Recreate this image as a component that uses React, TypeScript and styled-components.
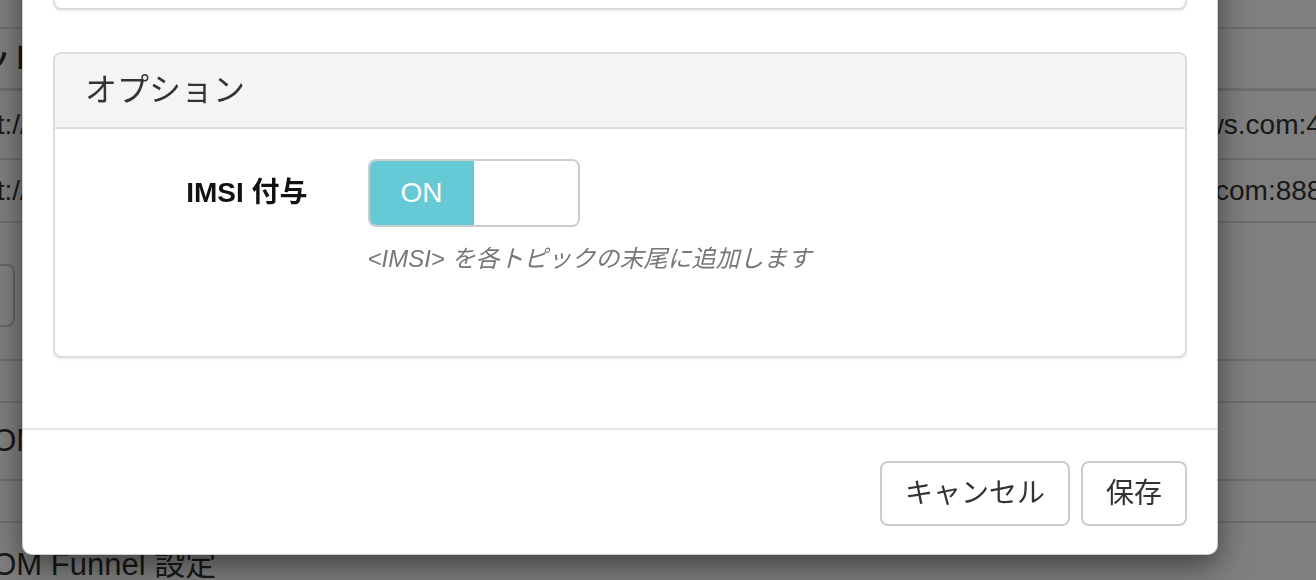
import React from 'react';
import styled, { createGlobalStyle } from 'styled-components';

const GlobalStyle = createGlobalStyle`
    * {
        box-sizing: border-box;
    }

    html, body {
        margin: 0;
        padding: 0;
        overflow: hidden;
    }

    body {
        width: 1316px;
        height: 580px;
        background: #FFF;
        color: #333;
        font-family: "Liberation Sans", "Noto Sans CJK JP", sans-serif;
    }
`;

// Page behind the modal
const Page = styled.div`
    width: 1480px;
    margin-left: -120px;
    padding-top: 27px;
    font-size: 28px;
    line-height: 40px;
    color: #333;
`;

const Table = styled.div`
    border-top: 2px solid #DDD;
`;

const TableRow = styled.div<{ $height: number; $head?: boolean }>`
    display: grid;
    grid-template-columns: 700px 1fr;
    align-items: center;
    height: ${({ $height }) => $height}px;
    border-bottom: ${({ $head }) => ($head ? 3 : 2)}px solid #DDD;
    font-weight: ${({ $head }) => ($head ? 700 : 400)};
`;

const Cell = styled.div<{ $indent: number }>`
    padding-left: ${({ $indent }) => $indent}px;
    white-space: nowrap;
`;

const DestCell = styled.div<{ $end?: number }>`
    display: flex;
    justify-content: flex-end;
    overflow: hidden;
    white-space: nowrap;
    padding-right: ${({ $end }) => $end ?? 8}px;
`;

const PageButton = styled.button`
    height: 63px;
    margin-top: 9px;
    padding: 0 21px;
    border: 2px solid #CCC;
    border-radius: 8px;
    background: #FFF;
    color: #333;
    font: inherit;
`;

const List = styled.div`
    margin-top: 40px;
    border-top: 2px solid #DDD;
    font-size: 31px;
`;

const ListItem = styled.div<{ $height: number }>`
    display: flex;
    align-items: center;
    height: ${({ $height }) => $height}px;
    padding-left: 2px;
    border-bottom: 2px solid #DDD;
    white-space: nowrap;
`;

const Backdrop = styled.div`
    position: fixed;
    inset: 0;
    background: rgba(0, 0, 0, 0.5);
`;

// Modal
const Modal = styled.div`
    position: fixed;
    left: 22px;
    right: 98px;
    bottom: 25px;
    background: #FFF;
    border: 1px solid rgba(0, 0, 0, 0.2);
    border-radius: 10px;
    box-shadow: 0 10px 30px rgba(0, 0, 0, 0.5);
    font-size: 28px;
    line-height: 40px;
    color: #333;
`;

const ModalBody = styled.div`
    padding: 30px;
`;

const Panel = styled.section<{ $gap: number }>`
    background: #FFF;
    border: 2px solid #DDD;
    border-radius: 8px;
    box-shadow: 0 2px 2px rgba(0, 0, 0, 0.05);
    margin-bottom: ${({ $gap }) => $gap}px;
    overflow: hidden;
`;

const PanelHeading = styled.div`
    background: #F4F4F4;
    border-bottom: 2px solid #DDD;
    padding: 19px 30px;
`;

const PanelTitle = styled.h3`
    margin: 0;
    font-size: 32px;
    line-height: 35px;
    font-weight: 400;
    color: #333;
`;

const PanelBody = styled.div<{ $height?: number }>`
    padding: 30px;
    height: ${({ $height }) => ($height ? `${$height}px` : 'auto')};
`;

const FormRow = styled.div`
    display: grid;
    grid-template-columns: 25% 75%;
    margin: 0 -30px 50px;
`;

const Label = styled.label`
    padding: 14px 30px 0;
    text-align: right;
    font-weight: 700;
    color: #111;
`;

const Control = styled.div`
    padding: 0 30px;
`;

const Switch = styled.div`
    display: flex;
    width: 212px;
    height: 68px;
    border: 2px solid #CCC;
    border-radius: 8px;
    overflow: hidden;
`;

const SwitchOn = styled.span`
    width: 104px;
    display: flex;
    align-items: center;
    justify-content: center;
    background: #66C9D6;
    color: #FFF;
    font-size: 28px;
`;

const SwitchHandle = styled.span`
    flex: 1;
    background: #FFF;
`;

const HelpText = styled.p`
    margin: 15px 0 0;
    font-size: 24px;
    line-height: 34px;
    font-style: italic;
    color: #777;
`;

const ModalFooter = styled.div`
    display: flex;
    justify-content: flex-end;
    gap: 11px;
    padding: 31px 30px 28px;
    border-top: 2px solid #E5E5E5;
`;

const Button = styled.button`
    height: 65px;
    padding: 0 23px;
    border: 2px solid #CCC;
    border-radius: 8px;
    background: #FFF;
    color: #333;
    font-family: inherit;
    font-size: 28px;
    line-height: 39px;
`;

const App = () => {
    return (
        <>
            <GlobalStyle />
            <Page>
                <Table>
                    <TableRow $height={62} $head>
                        <Cell $indent={18}>ターゲット</Cell>
                        <DestCell></DestCell>
                    </TableRow>
                    <TableRow $height={69}>
                        <Cell $indent={70}>mqtt://beam.soracom.io:1883</Cell>
                        <DestCell $end={7}>mqtts://a1b2c3d4e5f6g7.iot.ap-northeast-1.amazonaws.com:443</DestCell>
                    </TableRow>
                    <TableRow $height={63}>
                        <Cell $indent={70}>mqtt://beam.soracom.io:1883</Cell>
                        <DestCell $end={22}>mqtts://mqtt.example.com:8883</DestCell>
                    </TableRow>
                    <TableRow $height={138}>
                        <Cell $indent={73}>
                            <PageButton>+</PageButton>
                        </Cell>
                        <DestCell></DestCell>
                    </TableRow>
                </Table>
                <List>
                    <ListItem $height={78}>SORACOM Beam 設定</ListItem>
                    <ListItem $height={42}></ListItem>
                    <ListItem $height={86}>SORACOM Funnel 設定</ListItem>
                </List>
            </Page>

            <Backdrop />

            <Modal role="dialog">
                <ModalBody>
                    <Panel $gap={42}>
                        <PanelBody $height={320} />
                    </Panel>
                    <Panel $gap={40}>
                        <PanelHeading>
                            <PanelTitle>オプション</PanelTitle>
                        </PanelHeading>
                        <PanelBody>
                            <FormRow>
                                <Label>IMSI 付与</Label>
                                <Control>
                                    <Switch>
                                        <SwitchOn>ON</SwitchOn>
                                        <SwitchHandle />
                                    </Switch>
                                    <HelpText>&lt;IMSI&gt; を各トピックの末尾に追加します</HelpText>
                                </Control>
                            </FormRow>
                        </PanelBody>
                    </Panel>
                </ModalBody>
                <ModalFooter>
                    <Button>キャンセル</Button>
                    <Button>保存</Button>
                </ModalFooter>
            </Modal>
        </>
    );
};

export default App;
